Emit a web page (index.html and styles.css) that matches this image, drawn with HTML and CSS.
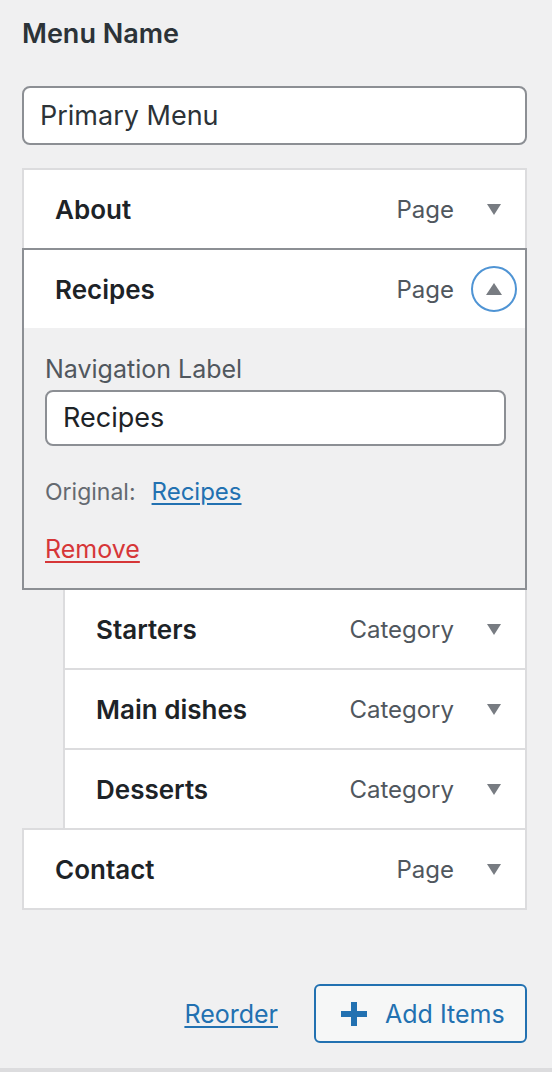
FILE: index.html
```html
<!DOCTYPE html>
<html lang="en">
<head>
<meta charset="utf-8">
<title>Menu</title>
<link rel="stylesheet" href="styles.css">
</head>
<body>
<div class="panel">
  <h2 class="menu-name-title">Menu Name</h2>
  <div class="text-field">Primary Menu</div>

  <ul class="menu-list">
    <li class="item">
      <div class="item-head">
        <span class="item-title">About</span>
        <span class="item-type">Page</span>
        <span class="toggle"><svg width="14" height="11" viewBox="0 0 14 11"><polygon points="0,0 14,0 7,11" fill="#787c82"/></svg></span>
      </div>
    </li>
    <li class="item item-open">
      <div class="item-head">
        <span class="item-title">Recipes</span>
        <span class="item-type">Page</span>
        <span class="toggle toggle-focus"><svg width="16" height="12" viewBox="0 0 16 12"><polygon points="0,12 16,12 8,0" fill="#787c82"/></svg></span>
      </div>
      <div class="item-body">
        <div class="field-label">Navigation Label</div>
        <div class="text-field small">Recipes</div>
        <div class="original">Original:<a class="link" href="#">Recipes</a></div>
        <a class="remove" href="#">Remove</a>
      </div>
    </li>
    <li class="item child">
      <div class="item-head">
        <span class="item-title">Starters</span>
        <span class="item-type">Category</span>
        <span class="toggle"><svg width="14" height="11" viewBox="0 0 14 11"><polygon points="0,0 14,0 7,11" fill="#787c82"/></svg></span>
      </div>
    </li>
    <li class="item child">
      <div class="item-head">
        <span class="item-title">Main dishes</span>
        <span class="item-type">Category</span>
        <span class="toggle"><svg width="14" height="11" viewBox="0 0 14 11"><polygon points="0,0 14,0 7,11" fill="#787c82"/></svg></span>
      </div>
    </li>
    <li class="item child">
      <div class="item-head">
        <span class="item-title">Desserts</span>
        <span class="item-type">Category</span>
        <span class="toggle"><svg width="14" height="11" viewBox="0 0 14 11"><polygon points="0,0 14,0 7,11" fill="#787c82"/></svg></span>
      </div>
    </li>
    <li class="item">
      <div class="item-head">
        <span class="item-title">Contact</span>
        <span class="item-type">Page</span>
        <span class="toggle"><svg width="14" height="11" viewBox="0 0 14 11"><polygon points="0,0 14,0 7,11" fill="#787c82"/></svg></span>
      </div>
    </li>
  </ul>

  <div class="actions">
    <a class="link reorder" href="#">Reorder</a>
    <button class="add-items" type="button">
      <svg width="26" height="24" viewBox="0 0 26 24"><rect x="10" y="0" width="6" height="24" fill="#2271b1"/><rect x="0" y="9" width="26" height="6" fill="#2271b1"/></svg>
      <span>Add Items</span>
    </button>
  </div>
</div>
<div class="bottom-bar"></div>
</body>
</html>
```

FILE: styles.css
```css
* { box-sizing: border-box; }

html, body {
  margin: 0;
  padding: 0;
  background: #f0f0f1;
}

body {
  font-family: Inter, "Noto Sans", "Liberation Sans", sans-serif;
  color: #1d2327;
  height: 1072px;
  display: flex;
  flex-direction: column;
}

.panel {
  padding: 18px 25px 0 22px;
  flex: 1;
}

.menu-name-title {
  margin: 0;
  font-size: 27px;
  line-height: 32px;
  font-weight: 600;
  color: #2c3338;
}

.text-field {
  margin-top: 36px;
  height: 59px;
  border: 2px solid #8c8f94;
  border-radius: 8px;
  background: #fff;
  font-size: 27px;
  line-height: 55px;
  padding-left: 16px;
  color: #2c3338;
}

.text-field.small {
  margin-top: 6px;
  height: 56px;
  line-height: 52px;
  color: #1d2327;
}

.menu-list {
  list-style: none;
  margin: 23px 0 0 0;
  padding: 0;
}

.item {
  background: #fff;
  border: 2px solid #dcdcde;
  margin-top: -2px;
}

.item:first-child { margin-top: 0; }

.item.child { margin-left: 41px; }

.item-open {
  position: relative;
  z-index: 1;
  border-color: #8c8f94;
}

.item-head {
  height: 78px;
  display: flex;
  align-items: center;
  padding: 0 8px 0 31px;
}

.item-title {
  font-size: 26px;
  font-weight: 600;
  flex: 1;
}

.item-type {
  font-size: 24px;
  color: #50575e;
  margin-right: 17px;
}

.toggle {
  width: 46px;
  height: 46px;
  border-radius: 50%;
  display: flex;
  align-items: center;
  justify-content: center;
}

.toggle svg { display: block; }

.toggle-focus {
  border: 2px solid #4f94d4;
}

.item-body {
  background: #f0f0f1;
  height: 260px;
  padding: 26px 19px 0 21px;
}

.field-label {
  font-size: 25px;
  color: #50575e;
  line-height: 30px;
}

.original {
  margin-top: 31px;
  font-size: 23px;
  color: #646970;
  line-height: 30px;
}

.link {
  color: #2271b1;
  text-decoration: underline;
  text-underline-offset: 3px;
}

.original .link {
  margin-left: 16px;
  font-size: 24px;
}

.remove {
  display: inline-block;
  margin-top: 27px;
  font-size: 25px;
  line-height: 30px;
  color: #d63638;
  text-decoration: underline;
  text-underline-offset: 3px;
}

.actions {
  margin-top: 74px;
  display: flex;
  justify-content: flex-end;
  align-items: center;
  gap: 36px;
}

.reorder {
  font-size: 25px;
}

.add-items {
  width: 213px;
  height: 59px;
  border: 2px solid #2271b1;
  border-radius: 6px;
  background: #f6f7f7;
  color: #2271b1;
  font-family: inherit;
  font-size: 25px;
  display: flex;
  align-items: center;
  gap: 18px;
  padding: 0 0 0 25px;
}

.add-items svg { display: block; }

.bottom-bar {
  height: 4px;
  background: #dcdcde;
}
```
